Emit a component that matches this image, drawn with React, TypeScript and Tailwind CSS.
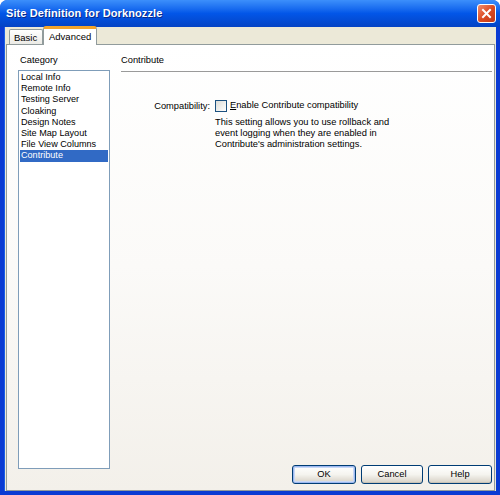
import React from "react";

const categories = [
	"Local Info",
	"Remote Info",
	"Testing Server",
	"Cloaking",
	"Design Notes",
	"Site Map Layout",
	"File View Columns",
	"Contribute",
];

const font = { fontFamily: '"Liberation Sans", Arial, sans-serif' };

function TitleBar() {
	return (
		<div className="h-[27px] flex items-center rounded-t-[7px] bg-gradient-to-b from-[#3c8ffb] via-[#0256e8] to-[#0443c4] pl-[6px] pr-[4px]">
			<div className="flex-1 text-white font-bold text-[11px] leading-none tracking-[0.1px]" style={{ textShadow: "1px 1px 0 #0a2a8a" }}>
				Site Definition for Dorknozzle
			</div>
			<div className="w-[19px] h-[19px] rounded-[3px] border border-white bg-gradient-to-br from-[#f08c6c] via-[#dc4b21] to-[#c0391a] flex items-center justify-center">
				<svg width="11" height="11" viewBox="0 0 11 11">
					<path d="M2 2 L9 9 M9 2 L2 9" stroke="white" strokeWidth="2" strokeLinecap="square" />
				</svg>
			</div>
		</div>
	);
}

function Tabs() {
	return (
		<div className="flex items-end h-[17px] pl-[4px]">
			<div className="h-[15px] w-[34px] border border-b-0 border-[#919b9c] rounded-t-[2px] bg-gradient-to-b from-white to-[#ecebe6] text-[9.5px] leading-[15px] pl-[4px] text-black">
				Basic
			</div>
			<div className="relative -mb-[1px] h-[19px] w-[54px] border-x border-[#919b9c] border-t-[3px] border-t-[#f3a42c] rounded-t-[3px] bg-white text-[9.5px] leading-[15px] pl-[5px] text-black z-10">
				Advanced
			</div>
		</div>
	);
}

function Button(props: { label: string; isDefault?: boolean; w: string }) {
	return (
		<div
			className={
				props.w +
				" h-[19px] rounded-[3px] border border-[#003c74] bg-gradient-to-b from-white via-[#f5f4ef] to-[#d6d0c5] flex items-center justify-center text-[9.3px] text-black " +
				(props.isDefault ? "shadow-[inset_0_0_0_1px_#9cb8f0,inset_0_0_0_2px_#c9d8f5]" : "shadow-[inset_0_-1px_0_#c8c2b6]")
			}
		>
			{props.label}
		</div>
	);
}

function ContributePanel() {
	return (
		<div className="flex-1 flex flex-col pr-[1px] pb-[6px]">
			<div className="pt-[9px] h-[26px] text-[9.3px] leading-[13px] text-black">Contribute</div>
			<div className="h-[1px] bg-[#9a9a9a] mr-[1px]" />
			<div className="flex mt-[27px]">
				<div className="w-[89px] text-right text-[9.3px] leading-[13px] pt-[1px] text-black">Compatibility:</div>
				<div className="pl-[5px] flex flex-col">
					<div className="flex items-center h-[14px]">
						<div className="w-[12px] h-[12px] border border-[#1c5180] bg-gradient-to-br from-[#dcdcd7] to-white" />
						<span className="ml-[3px] text-[9.3px] text-black">
							<span className="underline">E</span>nable Contribute compatibility
						</span>
					</div>
					<div className="mt-[4px] text-[9.3px] leading-[11px] text-black">
						This setting allows you to use rollback and
						<br />
						event logging when they are enabled in
						<br />
						Contribute's administration settings.
					</div>
				</div>
			</div>
			<div className="mt-auto flex justify-end gap-[5px] pr-[1px]">
				<Button label="OK" isDefault w="w-[64px]" />
				<Button label="Cancel" w="w-[62px]" />
				<Button label="Help" w="w-[64px]" />
			</div>
		</div>
	);
}

export default function App() {
	return (
		<div className="w-[500px] h-[495px] bg-[#0a3bd3] flex flex-col rounded-t-[8px]" style={font}>
			<TitleBar />
			<div className="flex-1 mx-[4px] mb-[4px] bg-[#ece9d8] flex flex-col border-l border-[#1a5ee8]">
				<Tabs />
				<div className="flex-1 mx-[1px] border border-[#919b9c] bg-gradient-to-b from-white via-[#fbfaf8] to-[#f3f0ea] flex pl-[11px] pr-0">
					<div className="w-[92px] flex flex-col pt-[9px]">
						<div className="h-[16px] text-[9.3px] leading-[13px] pl-[2px] text-black">Category</div>
						<div className="h-[399px] border border-[#7f9db9] bg-white pt-[1px] px-[1px]">
							{categories.map((c) => (
								<div
									key={c}
									className={
										"h-[11.2px] leading-[11px] text-[9.1px] pl-[1px] " +
										(c === "Contribute" ? "bg-[#316ac5] text-white" : "text-black")
									}
								>
									{c}
								</div>
							))}
						</div>
					</div>
					<div className="w-[11px]" />
					<ContributePanel />
				</div>
			</div>
		</div>
	);
}
